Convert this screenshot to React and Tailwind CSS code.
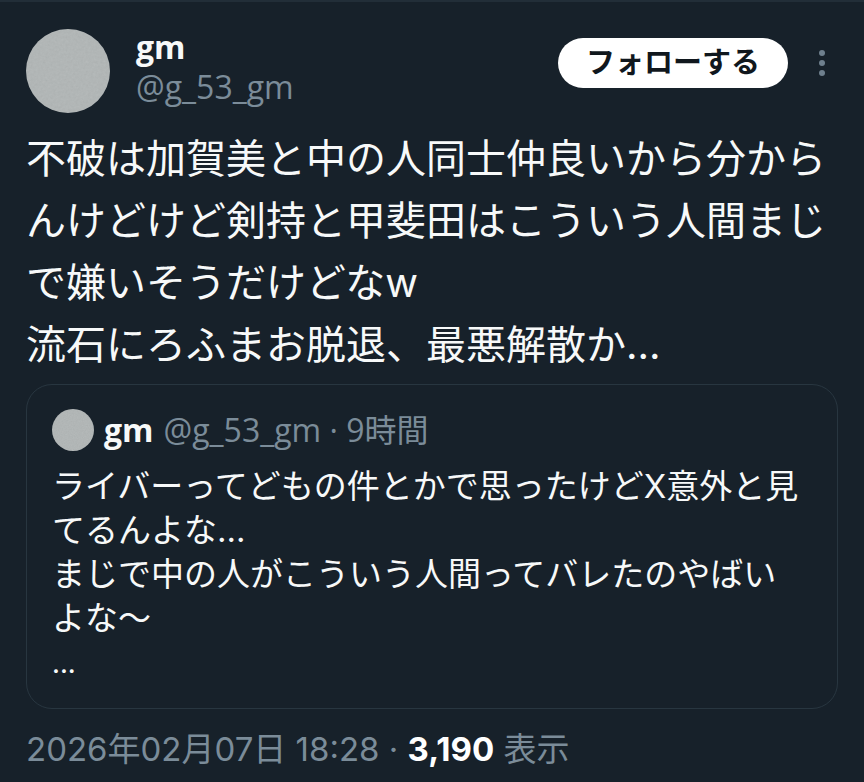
import React from "react";

const post = {
  name: "gm",
  handle: "@g_53_gm",
  lines: [
    "不破は加賀美と中の人同士仲良いから分からんけどけど剣持と甲斐田はこういう人間まじで嫌いそうだけどなw",
    "流石にろふまお脱退、最悪解散か...",
  ],
  date: "2026年02月07日 18:28",
  views: "3,190",
};

const quote = {
  time: "9時間",
  lines: [
    "ライバーってどもの件とかで思ったけどX意外と見てるんよな...",
    "まじで中の人がこういう人間ってバレたのやばいよな〜",
  ],
};

// Plain grey paper texture
function Avatar({ className }) {
  return (
    <svg
      viewBox="0 0 84 84"
      className={`shrink-0 rounded-full bg-[#b1b6b6] ${className}`}
      aria-hidden="true"
    >
      <filter id="paper">
        <feTurbulence type="fractalNoise" baseFrequency="0.4" numOctaves="2" />
        <feColorMatrix type="saturate" values="0" />
      </filter>
      <rect width="84" height="84" filter="url(#paper)" opacity="0.15" />
    </svg>
  );
}

function MoreIcon() {
  return (
    <svg viewBox="0 0 8 28" className="h-7 w-2 fill-[#6e7f8d]">
      <circle cx="4" cy="4" r="3" />
      <circle cx="4" cy="14" r="3" />
      <circle cx="4" cy="24" r="3" />
    </svg>
  );
}

function QuotedPost() {
  return (
    <article className="mt-2 rounded-[26px] border border-[#283640] px-[25px] pt-[23px] pb-5">
      <div className="flex items-center gap-2.5 font-['Open_Sans','Noto_Sans_CJK_JP',sans-serif] text-[32px] leading-11">
        <Avatar className="size-[42px]" />
        <span className="font-bold">{post.name}</span>
        <span className="text-[#7b8c99]">
          {post.handle} · {quote.time}
        </span>
      </div>
      <div className="mt-3 pr-2 text-[33px] leading-11">
        {quote.lines.map((line) => (
          <p key={line}>{line}</p>
        ))}
        <p className="text-[26px] leading-12 font-medium">...</p>
      </div>
    </article>
  );
}

function App() {
  return (
    <main className="min-h-screen bg-[#17212a] px-[26px] pb-2 font-[Inter,'Noto_Sans_CJK_JP',sans-serif] text-[#f7f9f9]">
      <hr className="-mx-[26px] border-t-2 border-[#222e38] pt-[27px]" />
      <header className="flex items-start justify-between">
        <div className="flex gap-[26px]">
          <Avatar className="size-[84px]" />
          <div className="-mt-0.5 font-['Open_Sans',sans-serif] text-[32px] leading-10">
            <p className="font-bold">{post.name}</p>
            <p className="text-[#7b8c99]">{post.handle}</p>
          </div>
        </div>
        <div className="mt-[9px] mr-3 flex items-center gap-[30px]">
          <button className="h-[50px] w-[230px] rounded-full bg-white text-[29px] font-bold text-[#10171d]">
            フォローする
          </button>
          <button aria-label="その他">
            <MoreIcon />
          </button>
        </div>
      </header>

      <div className="mt-[15px] text-[40px] leading-[62px]">
        {post.lines.map((line) => (
          <p key={line}>{line}</p>
        ))}
      </div>

      <QuotedPost />

      <footer className="mt-4 text-[33px] leading-12 text-[#7b8c99]">
        {post.date} · <b className="font-bold text-white">{post.views}</b> 表示
      </footer>
    </main>
  );
}

export default App;
